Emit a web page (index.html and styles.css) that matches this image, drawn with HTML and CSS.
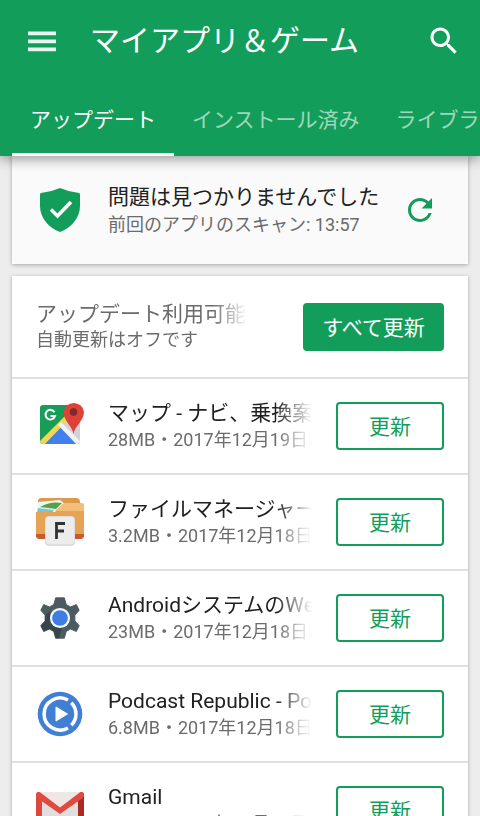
FILE: index.html
```html
<!DOCTYPE html>
<html lang="ja">
<head>
    <meta charset="UTF-8">
    <meta name="viewport" content="width=device-width, initial-scale=1.0">
    <title>マイアプリ＆ゲーム</title>
    <link rel="stylesheet" href="styles.css">
</head>
<body>
    <header class="header">
        <div class="toolbar">
            <button type="button" class="icon-button" aria-label="メニュー">
                <svg width="28" height="21" viewBox="0 0 28 21" fill="currentColor" fill-opacity="0.9">
                    <path d="M0 .5h28v3.7H0zM0 8.500h28v3.700H0zM0 16.500h28v3.700H0z"/>
                </svg>
            </button>
            <h1 class="page-title">マイアプリ＆ゲーム</h1>
            <button type="button" class="icon-button" aria-label="検索">
                <svg width="36" height="36" viewBox="0 0 24 24" fill="currentColor">
                    <path d="M15.5 14h-.79l-.28-.27C15.41 12.59 16 11.11 16 9.5 16 5.91 13.09 3 9.5 3S3 5.91 3 9.5 5.91 16 9.5 16c1.61 0 3.09-.59 4.23-1.57l.27.28v.79l5 4.99L20.49 19l-4.99-5zm-6 0C7.01 14 5 11.99 5 9.5S7.01 5 9.5 5 14 7.01 14 9.5 11.99 14 9.5 14z"/>
                </svg>
            </button>
        </div>
        <nav class="tabs">
            <button type="button" class="tab active">アップデート</button>
            <button type="button" class="tab">インストール済み</button>
            <button type="button" class="tab">ライブラリ</button>
        </nav>
    </header>

    <main class="content">
        <section class="card scan">
            <svg class="app-icon" viewBox="0 0 48 48">
                <path d="M24 2Q33 6 43 7Q44 7 44 9V20C44 32 35 42 24 46C13 42 4 32 4 20V9Q4 7 5 7Q15 6 24 2Z" fill="#129e5a"/>
                <path d="M15 23.500L21.500 30L35 16" fill="none" stroke="#fff" stroke-width="3.500"/>
            </svg>
            <div class="text">
                <h2 class="name">問題は見つかりませんでした</h2>
                <p class="meta">前回のアプリのスキャン: 13:57</p>
            </div>
            <button type="button" class="icon-button refresh" aria-label="再スキャン">
                <svg width="36" height="36" viewBox="0 0 24 24" fill="currentColor">
                    <path d="M17.650 6.350C16.200 4.900 14.210 4 12 4c-4.420 0-7.990 3.580-7.990 8s3.570 8 7.990 8c3.730 0 6.840-2.550 7.730-6h-2.080c-.82 2.330-3.040 4-5.650 4-3.310 0-6-2.690-6-6s2.690-6 6-6c1.660 0 3.140.69 4.220 1.780L13 11h7V4l-2.350 2.350z"/>
                </svg>
            </button>
        </section>

        <section class="card">
            <div class="list-header">
                <div class="text fade">
                    <h2 class="name">アップデート利用可能</h2>
                    <p class="meta">自動更新はオフです</p>
                </div>
                <button type="button" class="button filled">すべて更新</button>
            </div>

            <ul class="app-list">
                <li class="app">
                    <!-- Maps -->
                    <svg class="app-icon" viewBox="0 2 48 48">
                        <defs>
                            <clipPath id="mapClip"><rect x="4" y="5" width="40" height="39" rx="3"/></clipPath>
                        </defs>
                        <g clip-path="url(#mapClip)">
                            <rect x="4" y="5" width="40" height="39" fill="#189d58"/>
                            <path d="M24 24L44 10V44Z" fill="#d3d3d3"/>
                            <path d="M4 44L24 24L44 44Z" fill="#4080ed"/>
                            <path d="M2 43L32 13V20L8 45H4Z" fill="#f4d64a"/>
                            <path d="M22 25L25 22L46 43L42 46Z" fill="#f2f2f2"/>
                        </g>
                        <path d="M18.500 12.200A4.800 4.800 0 1 0 19 16H14.500" fill="none" stroke="#fff" stroke-width="2"/>
                        <path d="M37.500 34C36.500 26 27.500 21 27.500 12A10.300 10 0 0 1 48 12C48 21 38.500 26 37.500 34Z" fill="#de4237"/>
                        <circle cx="37.500" cy="12" r="3.800" fill="#7c2a2a"/>
                    </svg>
                    <div class="text fade">
                        <h3 class="name">マップ - ナビ、乗換案内</h3>
                        <p class="meta">28MB・2017年12月19日に更新</p>
                    </div>
                    <button type="button" class="button">更新</button>
                </li>
                <li class="app">
                    <!-- File manager -->
                    <svg class="app-icon" viewBox="0 1 48 48">
                        <path d="M2 4Q2 1 5 1H40Q44 1 44 5V20H2Z" fill="#dc9a4c"/>
                        <path d="M2 5L24 3L29 7L20 16H1Z" fill="#eef5f6"/>
                        <path d="M6 9Q15 4 26 6L20 12L4 10Z" fill="#55a346"/>
                        <path d="M2 11L18 13L16 16H1Z" fill="#78c4d2"/>
                        <path d="M0 15H19L28 6H45Q48 6 48 9V38Q48 42 44 42H4Q0 42 0 38Z" fill="#e5a454"/>
                        <path d="M19 14L28 6H45Q48 6 48 9V14Z" fill="#f2bf7b"/>
                        <path d="M0 37H48V38Q48 42 44 42H4Q0 42 0 38Z" fill="#cb592b"/>
                        <rect x="9" y="19" width="30" height="30" rx="4" fill="#dedede"/>
                        <rect x="10" y="20" width="28" height="27" rx="3" fill="#ececec"/>
                        <path d="M20.500 42V26.500H29M20.500 34H28" fill="none" stroke="#303437" stroke-width="2.800"/>
                    </svg>
                    <div class="text fade">
                        <h3 class="name">ファイルマネージャー</h3>
                        <p class="meta">3.2MB・2017年12月18日に更新</p>
                    </div>
                    <button type="button" class="button">更新</button>
                </li>
                <li class="app">
                    <!-- Android System WebView -->
                    <svg class="app-icon" viewBox="-1 -1 50 50">
                        <path d="M19.500 3H28.500L30.500 10L35 12.500L41 10L44 16L39.500 21V27L44 32L41 38L35 35.500L30.500 38L28.500 45H19.500L17.500 38L13 35.500L7 38L4 32L8.500 27V21L4 16L7 10L13 12.500L17.500 10Z" fill="#4b5b60" stroke="#4b5b60" stroke-linejoin="round"/>
                        <path d="M14 31L24 24L26 34L23 45H19.500L17.500 38L13 35.500L7 38L4 32L8.500 27V21L14 17Z" fill="#37464b"/>
                        <circle cx="24" cy="24" r="10.500" fill="#f1faff"/>
                        <circle cx="24" cy="24" r="8.200" fill="#3f7de5"/>
                    </svg>
                    <div class="text fade">
                        <h3 class="name">AndroidシステムのWebView</h3>
                        <p class="meta">23MB・2017年12月18日に更新</p>
                    </div>
                    <button type="button" class="button">更新</button>
                </li>
                <li class="app">
                    <!-- Podcast Republic -->
                    <svg class="app-icon" viewBox="0 0 48 48">
                        <circle cx="24" cy="24" r="22.300" fill="#417fd5"/>
                        <path d="M32 10.100A16 16 0 1 0 32 37.900" fill="none" stroke="#fff" stroke-width="3.500"/>
                        <path d="M35.300 12.700A16 16 0 0 1 35.300 35.300" fill="none" stroke="#fff" stroke-width="3.500"/>
                        <path d="M20 17L31.500 24L20 31Z" fill="#fff" stroke="#fff" stroke-linejoin="round"/>
                    </svg>
                    <div class="text fade">
                        <h3 class="name">Podcast Republic - Podcast</h3>
                        <p class="meta">6.8MB・2017年12月18日に更新</p>
                    </div>
                    <button type="button" class="button">更新</button>
                </li>
                <li class="app">
                    <!-- Gmail -->
                    <svg class="app-icon" viewBox="0 0 48 48">
                        <rect x="1" y="6" width="46" height="36" rx="3" fill="#efe6e6"/>
                        <path d="M6 14L24 28L42 14V42H6Z" fill="#dfdfdf"/>
                        <path d="M0 9Q0 6 3 6L6 10V42H3Q0 42 0 39Z" fill="#dd483c"/>
                        <path d="M48 9Q48 6 45 6L42 10V42H45Q48 42 48 39Z" fill="#ab2a21"/>
                        <path d="M0 9Q0 6 3 6Q4 6 5 7L24 21.500L43 7Q44 6 45 6Q48 6 48 9Q48 11 46 12.500L24 28L2 12.500Q0 11 0 9Z" fill="#e14b3f"/>
                    </svg>
                    <div class="text fade">
                        <h3 class="name">Gmail</h3>
                        <p class="meta">27MB・2017年12月18日に更新</p>
                    </div>
                    <button type="button" class="button">更新</button>
                </li>
            </ul>
        </section>
    </main>
</body>
</html>
```
FILE: styles.css
```css
* {
    box-sizing: border-box;
}
body {
    display: flex;
    flex-direction: column;
    height: 100vh;
    margin: 0;
    overflow: hidden;
    font-family: Roboto, "Noto Sans CJK JP", sans-serif;
    background-color: #ededed;
    color: #212121;
}
h1, h2, h3, p, ul {
    margin: 0;
    padding: 0;
    font-weight: normal;
}
button {
    padding: 0;
    border: none;
    background: none;
    font-family: inherit;
    font-size: 21px;
    color: inherit;
    cursor: pointer;
}

/* Header */
.header {
    position: relative;
    z-index: 1;
    flex: none;
    background-color: #129e5a;
    color: #fff;
    box-shadow: 0 3px 12px rgba(0, 0, 0, 0.4);
}
.toolbar {
    display: flex;
    align-items: center;
    height: 82px;
    padding: 0 12px 0 18px;
}
.icon-button {
    display: flex;
    flex: none;
    align-items: center;
    justify-content: center;
    width: 48px;
    height: 48px;
}
.page-title {
    flex: 1;
    padding-left: 24px;
    font-size: 30px;
    line-height: 40px;
    white-space: nowrap;
}
.tabs {
    display: flex;
    height: 74px;
    padding-left: 12px;
    overflow: hidden;
}
.tab {
    flex: none;
    padding: 0 18px;
    border-bottom: 3px solid transparent;
    color: rgba(255, 255, 255, 0.6);
    white-space: nowrap;
}
.tab.active {
    border-color: #fff;
    color: #fff;
}

/* Cards */
.content {
    flex: 1;
    min-height: 0;
    padding: 0 12px;
    overflow-y: auto;
    scrollbar-width: none;
}
.card {
    margin-bottom: 12px;
    background-color: #fff;
    box-shadow: 0 1px 4px rgba(0, 0, 0, 0.3);
}
.scan {
    display: flex;
    align-items: center;
    height: 108px;
    padding: 0 24px;
    background-color: #fafafa;
}
.scan .name {
    line-height: 30px;
}
.refresh {
    color: #129e5a;
}
.text {
    flex: 1;
    min-width: 0;
    overflow: hidden;
    white-space: nowrap;
}
.fade {
    -webkit-mask-image: linear-gradient(to left, transparent, #000 36px);
    mask-image: linear-gradient(to left, transparent, #000 36px);
}
.name {
    font-size: 21px;
    line-height: 28px;
}
.meta {
    font-size: 18px;
    line-height: 26px;
    color: #6b6b6b;
}
.app-icon {
    flex: none;
    width: 48px;
    height: 48px;
    margin-right: 24px;
}

/* Update list */
.list-header, .app {
    display: flex;
    align-items: center;
    padding: 0 24px;
    border-bottom: 2px solid #e0e0e0;
}
.list-header {
    height: 103px;
}
.list-header .text {
    flex: 0 1 212px;
    margin-right: auto;
}
.list-header .name {
    line-height: 26px;
    color: #6b6b6b;
}
.app-list {
    list-style: none;
}
.app {
    height: 96px;
}
.app:last-child {
    border-color: transparent;
}
.button {
    flex: none;
    width: 108px;
    height: 48px;
    margin-left: 24px;
    padding-bottom: 2px;
    border: 2px solid #129e5a;
    border-radius: 4px;
    color: #129e5a;
}
.button.filled {
    width: 141px;
    background-color: #129e5a;
    color: #fff;
}
```
